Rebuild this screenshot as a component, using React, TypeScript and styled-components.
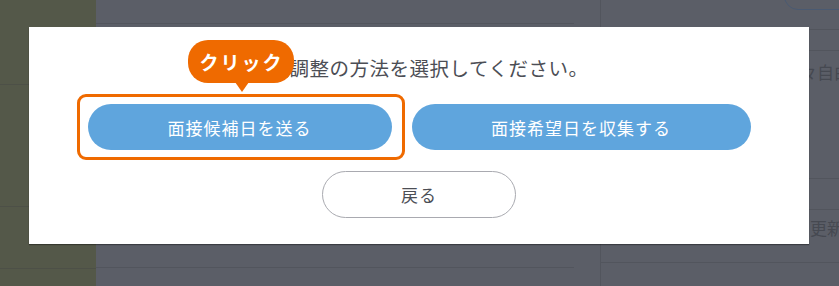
import React from 'react';
import styled, { createGlobalStyle } from 'styled-components';

const GlobalStyle = createGlobalStyle`
  html, body {
    margin: 0;
    padding: 0;
    background: #5b5e67;
  }
  body {
    font-family: "Noto Sans CJK JP", "Noto Sans", sans-serif;
  }
`;

const ORANGE = '#ef6a00';
const BLUE = '#5fa5dd';
const LINE = '#52555d';

const Page = styled.div`
  position: relative;
  display: flex;
  width: 839px;
  height: 286px;
  overflow: hidden;
  background: #5b5e67;
`;

const Sidebar = styled.div`
  display: flex;
  flex-direction: column;
  flex-shrink: 0;
  width: 96px;
  background: #545849;
`;

const SideRow = styled.div<{ $h: number }>`
  height: ${p => p.$h}px;
  flex-shrink: 0;
  border-bottom: 1px solid #4d5047;
`;

const Main = styled.div`
  display: flex;
  flex: 1;
  min-width: 0;
`;

const Content = styled.div`
  display: flex;
  flex-direction: column;
  flex-shrink: 0;
  width: 478px;
  margin-right: 26px;
`;

const ContentRow = styled.div<{ $h: number }>`
  height: ${p => p.$h}px;
  flex-shrink: 0;
  border-bottom: 1px solid ${LINE};
`;

const RightPanel = styled.div`
  display: flex;
  flex-direction: column;
  flex: 1;
  min-width: 0;
  border-left: 1px solid ${LINE};
`;

const PanelRow = styled.div<{ $h: number; $pad?: number; $left?: number }>`
  height: ${p => p.$h}px;
  box-sizing: border-box;
  flex-shrink: 0;
  border-bottom: 1px solid ${LINE};
  color: #464951;
  font-size: 17px;
  line-height: 20px;
  padding: ${p => p.$pad ?? 0}px 0 0 ${p => p.$left ?? 0}px;
  white-space: nowrap;
  overflow: hidden;
`;

const PanelTop = styled.div`
  position: relative;
  height: 30px;
  box-sizing: border-box;
  flex-shrink: 0;
  border-bottom: 1px solid ${LINE};
`;

const GhostButton = styled.div`
  position: absolute;
  left: 183px;
  top: -20px;
  width: 90px;
  height: 28px;
  border: 1px solid #4a5a72;
  border-radius: 14px;
`;

const Overlay = styled.div`
  position: absolute;
  left: 29px;
  top: 27px;
  width: 780px;
  height: 217px;
  box-sizing: border-box;
  background: #fff;
  box-shadow: 0 1px 1px rgba(0, 0, 0, 0.35);
  display: flex;
  flex-direction: column;
  align-items: center;
  padding-top: 27px;
`;

const Title = styled.div`
  font-size: 19.5px;
  line-height: 28px;
  color: #4c4e55;
  letter-spacing: 0.5px;
`;

const ButtonRow = styled.div`
  display: flex;
  gap: 20px;
  margin-top: 22px;
`;

const Highlighted = styled.div`
  position: relative;
`;

const Frame = styled.div`
  position: absolute;
  left: -11px;
  right: -13px;
  top: -10px;
  bottom: -10px;
  border: 3px solid ${ORANGE};
  border-radius: 9px;
  pointer-events: none;
`;

const Bubble = styled.div`
  position: absolute;
  left: 100px;
  top: -64px;
  width: 106px;
  height: 43px;
  box-sizing: border-box;
  background: ${ORANGE};
  border-radius: 20px;
  color: #fff;
  font-weight: 700;
  font-size: 19px;
  letter-spacing: 2px;
  display: flex;
  align-items: center;
  justify-content: center;
  padding-left: 2px;

  &::after {
    content: '';
    position: absolute;
    left: 47px;
    bottom: -9px;
    border-left: 7px solid transparent;
    border-right: 7px solid transparent;
    border-top: 10px solid ${ORANGE};
  }
`;

const PrimaryButton = styled.button<{ $w: number }>`
  width: ${p => p.$w}px;
  height: 46px;
  border: none;
  border-radius: 23px;
  background: ${BLUE};
  color: #fff;
  font-family: inherit;
  font-size: 17px;
  letter-spacing: 1px;
  cursor: pointer;
`;

const BackButton = styled.button`
  margin-top: 21px;
  width: 194px;
  height: 47px;
  box-sizing: border-box;
  border: 1px solid #a9aab0;
  border-radius: 24px;
  background: #fff;
  color: #4c4e55;
  font-family: inherit;
  font-size: 17px;
  letter-spacing: 1px;
  cursor: pointer;
`;

export default function App() {
  return (
    <>
      <GlobalStyle />
      <Page>
        <Sidebar>
          <SideRow $h={84} />
          <SideRow $h={121} />
          <SideRow $h={61} />
        </Sidebar>
        <Main>
          <Content>
            <ContentRow $h={23} />
            <ContentRow $h={243} />
          </Content>
          <RightPanel>
            <PanelTop>
              <GhostButton />
            </PanelTop>
            <PanelRow $h={21} />
            <PanelRow $h={128} $pad={11} $left={199}>々自由</PanelRow>
            <PanelRow $h={31} />
            <PanelRow $h={53} $pad={8} $left={209}>更新</PanelRow>
          </RightPanel>
        </Main>
        <Overlay>
          <Title>日程調整の方法を選択してください。</Title>
          <ButtonRow>
            <Highlighted>
              <PrimaryButton $w={304}>面接候補日を送る</PrimaryButton>
              <Frame />
              <Bubble>クリック</Bubble>
            </Highlighted>
            <PrimaryButton $w={339}>面接希望日を収集する</PrimaryButton>
          </ButtonRow>
          <BackButton>戻る</BackButton>
        </Overlay>
      </Page>
    </>
  );
}
